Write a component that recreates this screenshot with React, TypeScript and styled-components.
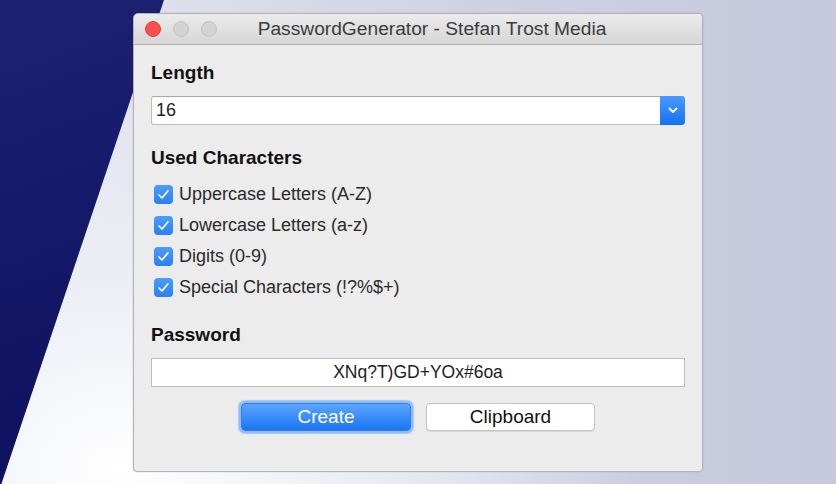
import React from "react";
import styled, { createGlobalStyle } from "styled-components";

const Global = createGlobalStyle`
  html, body { margin: 0; padding: 0; }
  body { font-family: "Liberation Sans", Arial, sans-serif; }
`;

const Page = styled.div`
  position: relative;
  width: 836px;
  height: 484px;
  overflow: hidden;
  background: radial-gradient(ellipse 520px 420px at 120px 470px, #ffffff 0%, #eceef5 45%, rgba(200,202,222,0) 100%),
    linear-gradient(90deg, #e6e7f0 0%, #cfd0e2 60%, #c6c8dd 100%);
  padding: 13px 0 0 133px;
  box-sizing: border-box;
  &::before {
    content: "";
    position: absolute;
    left: 0;
    top: 0;
    width: 166px;
    height: 484px;
    background: linear-gradient(160deg, #1d2272 0%, #141868 50%, #0c0f5c 100%);
    clip-path: polygon(0 0, 164px 0, 0 488px);
  }
`;

const Window = styled.div`
  position: relative;
  width: 570px;
  height: 459px;
  box-sizing: border-box;
  border: 1px solid #b3b3b7;
  border-radius: 5px 5px 4px 4px;
  background: #ececec;
  box-shadow: 0 0 2px rgba(0,0,0,0.15);
  display: flex;
  flex-direction: column;
  overflow: hidden;
`;

const TitleBar = styled.div`
  height: 30px;
  flex: none;
  display: flex;
  align-items: center;
  background: linear-gradient(#ebebeb, #d6d6d6);
  border-bottom: 1px solid #b4b4b4;
  position: relative;
`;

const Lights = styled.div`
  display: flex;
  gap: 12px;
  padding-left: 11px;
`;

const Light = styled.span<{ $red?: boolean }>`
  width: 16px;
  height: 16px;
  border-radius: 50%;
  box-sizing: border-box;
  background: ${(p) => (p.$red ? "#fc4f4f" : "#d3d3d3")};
  border: 1px solid ${(p) => (p.$red ? "#e53e3e" : "#c2c2c2")};
`;

const Title = styled.div`
  position: absolute;
  left: 28px;
  right: 0;
  text-align: center;
  font-size: 19.2px;
  color: #3c3c3c;
  pointer-events: none;
`;

const Body = styled.div`
  flex: 1;
  padding: 17px 17px 0 17px;
  display: flex;
  flex-direction: column;
`;

const Heading = styled.div`
  font-weight: bold;
  font-size: 19px;
  color: #111;
  line-height: 22px;
`;

const SelectBox = styled.div`
  margin-top: 12px;
  height: 29px;
  display: flex;
  box-sizing: border-box;
  background: #fff;
  border: 1px solid #bdbdbd;
  border-top-color: #a9a9a9;
  border-radius: 3px;
`;

const SelectValue = styled.div`
  flex: 1;
  padding-left: 4px;
  font-size: 18px;
  line-height: 27px;
  color: #222;
`;

const SelectButton = styled.div`
  width: 25px;
  margin: -1px -1px -1px 0;
  border-radius: 0 4px 4px 0;
  background: linear-gradient(#4a9bff, #1570f4);
  display: flex;
  align-items: center;
  justify-content: center;
`;

const Section = styled.div<{ $mt: number }>`
  margin-top: ${(p) => p.$mt}px;
`;

const CheckList = styled.div`
  margin-top: 15px;
  display: flex;
  flex-direction: column;
  gap: 11.3px;
`;

const CheckRow = styled.div`
  display: flex;
  align-items: center;
  gap: 6px;
  padding-left: 3px;
  height: 20px;
`;

const Box = styled.span`
  width: 19px;
  height: 19px;
  border-radius: 4px;
  background: linear-gradient(#4b9cfb, #2a80f3);
  display: flex;
  align-items: center;
  justify-content: center;
  flex: none;
`;

const Label = styled.span`
  font-size: 18px;
  color: #2a2a2a;
`;

const PassField = styled.div`
  margin-top: 12px;
  height: 29px;
  box-sizing: border-box;
  background: #fff;
  border: 1px solid #bdbdbd;
  text-align: center;
  font-size: 17.5px;
  line-height: 27px;
  color: #222;
`;

const Buttons = styled.div`
  margin-top: 16px;
  display: flex;
  justify-content: center;
  align-items: center;
  gap: 15px;
`;

const Button = styled.div<{ $primary?: boolean }>`
  width: ${(p) => (p.$primary ? "170px" : "169px")};
  height: 28px;
  box-sizing: border-box;
  border-radius: 4px;
  display: flex;
  align-items: center;
  justify-content: center;
  font-size: 19px;
  color: ${(p) => (p.$primary ? "#fff" : "#111")};
  background: ${(p) => (p.$primary ? "linear-gradient(#5aa6ff, #1c74f3)" : "#fff")};
  border: 1px solid ${(p) => (p.$primary ? "#2a7ef0" : "#c4c4c4")};
  box-shadow: ${(p) => (p.$primary ? "0 0 0 2px #8fbdf5, 0 0 1px 3px rgba(110,165,240,0.5)" : "0 1px 0 rgba(0,0,0,0.08)")};
`;

const Chevron = () => (
  <svg width="10" height="7" viewBox="0 0 10 7">
    <path d="M1.5 1.5 L5 5 L8.5 1.5" fill="none" stroke="#fff" strokeWidth="1.8" strokeLinecap="round" strokeLinejoin="round" />
  </svg>
);

const Check = () => (
  <svg width="13" height="11" viewBox="0 0 13 11">
    <path d="M2 6 L5 9 L11 1.8" fill="none" stroke="#fff" strokeWidth="1.7" strokeLinecap="round" strokeLinejoin="round" />
  </svg>
);

const options = [
  "Uppercase Letters (A-Z)",
  "Lowercase Letters (a-z)",
  "Digits (0-9)",
  "Special Characters (!?%$+)",
];

export default function App() {
  return (
    <>
      <Global />
      <Page>
        <Window>
          <TitleBar>
            <Lights>
              <Light $red />
              <Light />
              <Light />
            </Lights>
            <Title>PasswordGenerator - Stefan Trost Media</Title>
          </TitleBar>
          <Body>
            <Heading>Length</Heading>
            <SelectBox>
              <SelectValue>16</SelectValue>
              <SelectButton>
                <Chevron />
              </SelectButton>
            </SelectBox>
            <Section $mt={22}>
              <Heading>Used Characters</Heading>
              <CheckList>
                {options.map((o) => (
                  <CheckRow key={o}>
                    <Box>
                      <Check />
                    </Box>
                    <Label>{o}</Label>
                  </CheckRow>
                ))}
              </CheckList>
            </Section>
            <Section $mt={26}>
              <Heading>Password</Heading>
              <PassField>XNq?T)GD+YOx#6oa</PassField>
            </Section>
            <Buttons>
              <Button $primary>Create</Button>
              <Button>Clipboard</Button>
            </Buttons>
          </Body>
        </Window>
      </Page>
    </>
  );
}
